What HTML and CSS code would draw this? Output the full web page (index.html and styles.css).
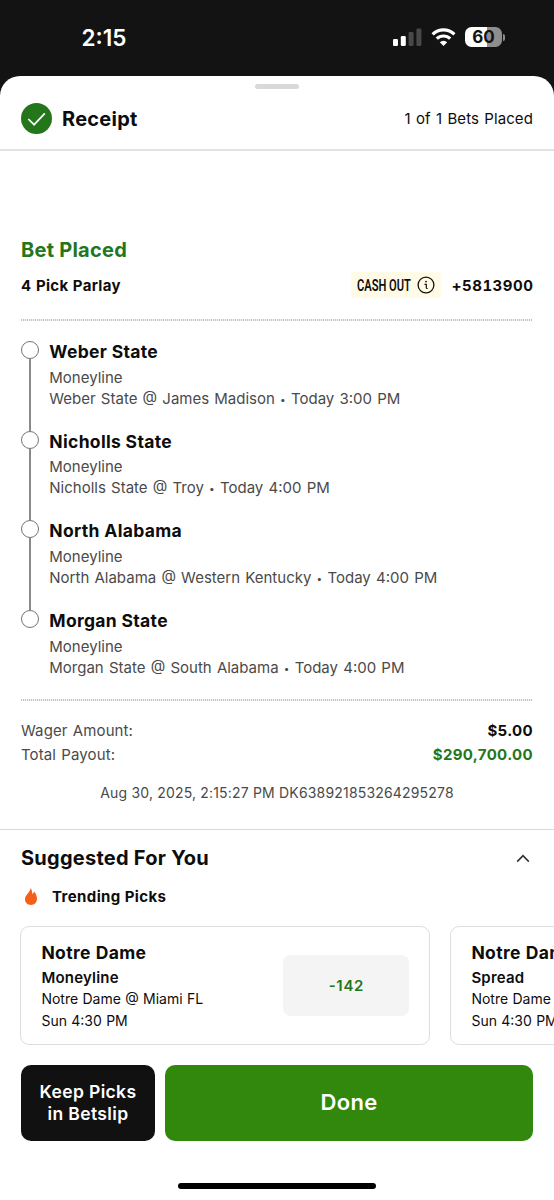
FILE: index.html
```html
<!DOCTYPE html>
<html lang="en">
<head>
<meta charset="utf-8">
<title>Receipt</title>
<link rel="stylesheet" href="styles.css">
</head>
<body>
<div class="status">
  <span class="time">2:15</span>
  <div class="indicators">
    <svg class="signal" width="29" height="18" viewBox="0 0 29 18">
      <rect x="0" y="11" width="5" height="7" rx="1.3" fill="#fff"/>
      <rect x="7.8" y="8" width="5" height="10" rx="1.3" fill="#fff"/>
      <rect x="15.6" y="4" width="5" height="14" rx="1.3" fill="#48484a"/>
      <rect x="23.4" y="0.5" width="5" height="17.5" rx="1.3" fill="#48484a"/>
    </svg>
    <svg class="wifi" width="25" height="18" viewBox="0 0 25 18" fill="none" stroke="#fff">
      <path d="M1.6 6.4a15.6 15.6 0 0 1 21.8 0" stroke-width="3.2"/>
      <path d="M5.8 10.7a9.6 9.6 0 0 1 13.4 0" stroke-width="3.2"/>
      <path d="M12.5 18l-3.7-3.8a5.3 5.3 0 0 1 7.4 0z" fill="#fff" stroke="none"/>
    </svg>
    <div class="battery"><span class="level">60</span><i class="cap"></i></div>
  </div>
</div>
<main class="sheet">
  <header class="header">
    <div class="grabber"></div>
    <div class="header-row">
      <svg class="check" width="31" height="31" viewBox="0 0 31 31"><circle cx="15.5" cy="15.5" r="15.5" fill="#24761a"/><path d="M7.3 16l5.8 5.7L23.8 10.4" fill="none" stroke="#fff" stroke-width="1.7"/></svg>
      <h1 class="title">Receipt</h1>
      <span class="count">1 of 1 Bets Placed</span>
    </div>
  </header>
  <section class="bet">
    <h2 class="placed">Bet Placed</h2>
    <div class="parlay">
      <span class="parlay-name">4 Pick Parlay</span>
      <div class="cashout"><span class="cashout-box"><span class="cashout-label">CASH OUT</span></span>
        <svg width="18" height="18" viewBox="0 0 18 18" fill="none" stroke="#111"><circle cx="9" cy="9" r="7.9" stroke-width="1.3"/><path d="M7.5 8.4h1.8v3.3q0 .8.8.8h.6" stroke-width="1.2"/><circle cx="9" cy="5.6" r=".9" fill="#111" stroke="none"/></svg>
      </div>
      <span class="odds">+5813900</span>
    </div>
    <div class="dots"></div>
    <ol class="picks">
      <li class="pick"><b class="team">Weber State</b><span class="market">Moneyline</span><span class="match">Weber State @ James Madison <i class="dot">•</i> Today 3:00 PM</span></li>
      <li class="pick"><b class="team">Nicholls State</b><span class="market">Moneyline</span><span class="match">Nicholls State @ Troy <i class="dot">•</i> Today 4:00 PM</span></li>
      <li class="pick"><b class="team">North Alabama</b><span class="market">Moneyline</span><span class="match">North Alabama @ Western Kentucky <i class="dot">•</i> Today 4:00 PM</span></li>
      <li class="pick"><b class="team">Morgan State</b><span class="market">Moneyline</span><span class="match">Morgan State @ South Alabama <i class="dot">•</i> Today 4:00 PM</span></li>
    </ol>
    <div class="dots"></div>
    <div class="totals">
      <div class="total"><span>Wager Amount:</span><b class="wager">$5.00</b></div>
      <div class="total"><span>Total Payout:</span><b class="payout">$290,700.00</b></div>
    </div>
    <p class="stamp">Aug 30, 2025, 2:15:27 PM DK638921853264295278</p>
  </section>
  <section class="suggested">
    <div class="suggested-head"><h2 class="suggested-title">Suggested For You</h2>
      <svg width="14" height="9" viewBox="0 0 14 9" fill="none" stroke="#333" stroke-width="1.6"><path d="M1.2 7.6L7 1.7l5.8 5.9"/></svg>
    </div>
    <div class="trending">
      <svg width="12" height="17" viewBox="0 0 12 17"><path d="M5.8 0C6.8 2 7.2 3.8 7.3 6.2C8.3 5.5 8.8 4.5 8.9 3.5C11 5.5 12 8.2 12 10.8C12 14.4 9.5 17 6 17C2.5 17 0 14.6 0 11.1C0 7 4.6 5.2 5.8 0Z" fill="#f26019"/></svg>
      <span>Trending Picks</span>
    </div>
    <div class="cards">
      <article class="card">
        <div class="card-text"><b class="card-team">Notre Dame</b><b class="card-market">Moneyline</b><span class="card-match">Notre Dame @ Miami FL</span><span class="card-when">Sun 4:30 PM</span></div>
        <div class="price">-142</div>
      </article>
      <article class="card">
        <div class="card-text"><b class="card-team">Notre Dame</b><b class="card-market">Spread</b><span class="card-match">Notre Dame</span><span class="card-when">Sun 4:30 PM</span></div>
      </article>
    </div>
  </section>
  <footer class="actions">
    <button class="keep">Keep Picks<br>in Betslip</button>
    <button class="done">Done</button>
  </footer>
  <div class="home"></div>
</main>
</body>
</html>
```
FILE: styles.css
```css
*, *::before, *::after { box-sizing: border-box; }
body { margin: 0; width: 554px; height: 1200px; overflow: hidden; background: #131313; color: #0d0d0d; font-family: Inter, "Liberation Sans", sans-serif; font-size: 15px; }
h1, h2, p, ol { margin: 0; padding: 0; }
b { font-weight: 700; }
.status { height: 76px; display: flex; justify-content: space-between; padding: 0 49px 0 81.5px; color: #fff; }
.time { font-size: 22.5px; font-weight: 600; line-height: 76px; }
.indicators { display: flex; align-items: flex-start; padding-top: 27px; }
.signal { margin: 1px 9px 0 0; }
.wifi { margin: 1px 9px 0 0; }
.battery { position: relative; width: 37px; height: 20px; margin-right: 3px; border-radius: 6.5px; background: linear-gradient(90deg, #fff 60%, #8e8e8e 60%); text-align: center; }
.level { color: #131313; font-size: 17px; line-height: 20px; font-weight: 700; }
.cap { position: absolute; left: 38px; top: 6.5px; width: 2px; height: 7px; border-radius: 0 2px 2px 0; background: #8e8e8e; }
.sheet { height: 1124px; background: #fff; border-radius: 20px 20px 0 0; overflow: hidden; display: flex; flex-direction: column; }
.header { height: 75px; border-bottom: 2px solid #e2e2e2; padding-top: 8px; }
.grabber { width: 44px; height: 5px; border-radius: 3px; background: #d9d9d9; margin: 0 auto; }
.header-row { display: flex; align-items: center; height: 31px; margin: 14px 21px 0; }
.title { font-size: 20px; font-weight: 700; line-height: 32px; margin-left: 10px; flex: 1; letter-spacing: .25px; }
.count { line-height: 31px; letter-spacing: .1px; word-spacing: .9px; }
.bet { height: 678px; padding: 83px 21px 0; }
.placed { font-size: 20px; line-height: 32px; font-weight: 700; color: #24761a; letter-spacing: .25px; }
.parlay { display: flex; align-items: center; height: 26px; margin-top: 6px; font-weight: 700; }
.parlay-name { flex: 1; letter-spacing: .3px; word-spacing: .6px; }
.odds { width: 82px; text-align: right; font-variant-numeric: tabular-nums; letter-spacing: .5px; margin-right: -.4px; }
.cashout { display: flex; align-items: center; gap: 7px; height: 26px; width: 90px; background: #fffbe6; border-radius: 3px; padding-left: 6px; margin-right: 10px; }
.cashout-box { width: 53px; }
.cashout-label { display: inline-block; font-family: Roboto, sans-serif; font-weight: 600; font-size: 16px; white-space: nowrap; transform: scaleX(.695); transform-origin: 0 50%; }
.dots { height: 2px; background: repeating-linear-gradient(90deg, #c4c4c4 0 1px, #f4f4f4 1px 2px); }
.parlay + .dots { margin-top: 20.5px; }
.picks { list-style: none; height: 378.6px; padding-top: 19.5px; }
.pick { position: relative; height: 89.7px; padding-left: 28.3px; color: #4a4a4a; display: flex; flex-direction: column; }
.pick::before { content: ""; position: absolute; left: 0; top: 1px; width: 18px; height: 18px; border: 1.5px solid #747474; border-radius: 50%; }
.pick:not(:last-child)::after { content: ""; position: absolute; left: 8px; top: 19px; width: 2px; height: 71.7px; background: #8a8a8a; }
.team { color: #0d0d0d; font-size: 17.5px; line-height: 24px; letter-spacing: .32px; }
.market { line-height: 22px; margin-top: 2.8px; }
.match { line-height: 20px; white-space: nowrap; word-spacing: 1px; }
.dot { font-style: normal; font-size: 10px; line-height: 0; vertical-align: 1px; }
.totals { padding-top: 18px; color: #4a4a4a; letter-spacing: .1px; word-spacing: 1px; }
.total { display: flex; justify-content: space-between; line-height: 23.7px; }
.wager, .payout { letter-spacing: .35px; }
.wager { color: #0d0d0d; }
.payout { color: #24761a; }
.stamp { text-align: center; font-size: 14px; line-height: 20px; margin-top: 16px; color: #4a4a4a; letter-spacing: .18px; }
.suggested { border-top: 1.5px solid #d8d8d8; height: 236px; padding: 13px 0 0 21px; }
.suggested-head { display: flex; justify-content: space-between; align-items: center; height: 30px; padding-right: 24px; }
.suggested-title { font-size: 20px; line-height: 30px; font-weight: 700; letter-spacing: .25px; }
.trending { display: flex; align-items: center; height: 22px; margin-top: 12px; padding-left: 4px; gap: 15px; font-weight: 700; letter-spacing: .4px; }
.cards { display: flex; gap: 20px; margin: 18.5px 0 0 -.6px; }
.card { flex: 0 0 410px; height: 119.5px; border: 1.5px solid #dedede; border-radius: 9px; display: flex; justify-content: space-between; padding: 13px 20px 0; }
.card-text { display: flex; flex-direction: column; font-size: 14px; word-spacing: .4px; }
.card-team { font-size: 17.5px; line-height: 26px; letter-spacing: .35px; }
.card-market { font-size: 15px; line-height: 24px; font-weight: 600; letter-spacing: .2px; }
.card-match { line-height: 18px; }
.card-when { line-height: 26px; }
.price { width: 126px; height: 61px; margin-top: 15px; border-radius: 8px; background: #f4f4f4; color: #24761a; font-weight: 600; letter-spacing: .7px; display: flex; align-items: center; justify-content: center; }
.actions { display: flex; gap: 10px; height: 76px; margin: 0 21px; }
button { border: 0; border-radius: 10px; color: #fff; font-family: inherit; font-weight: 600; letter-spacing: .35px; padding: 0; }
.keep { width: 134px; background: #111; font-size: 17.5px; line-height: 22px; }
.done { flex: 1; background: #32870d; font-size: 22px; padding-bottom: 2px; }
.home { width: 198px; height: 6px; border-radius: 3px; background: #000; margin: 42px auto 0; }
```
